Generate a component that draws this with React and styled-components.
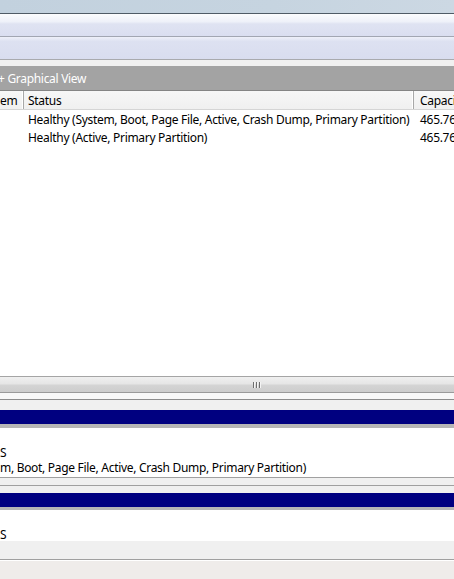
import React from "react";
import styled, { createGlobalStyle } from "styled-components";

const GlobalStyle = createGlobalStyle`
  html, body { margin: 0; padding: 0; background: #ffffff; overflow: hidden; }
  body { font-family: "Noto Sans", "Open Sans", sans-serif; font-size: 12px; letter-spacing: -0.3px; color: #000; }
`;

const Frame = styled.div`
  width: 454px;
  height: 579px;
  display: flex;
  flex-direction: column;
  overflow: hidden;
  background: #ffffff;
`;

const TitleStrip = styled.div`
  height: 13px;
  flex: none;
  background: linear-gradient(90deg, #c2d1de 0%, #c6d4e0 60%, #ccd8e3 100%);
  border-bottom: 1px solid #4f5b66;
`;

const MenuStrip = styled.div`
  height: 22px;
  flex: none;
  background: linear-gradient(180deg, #fbfcfe 0%, #eef1f9 35%, #dfe3f2 45%, #dadef0 100%);
  border-bottom: 1px solid #a2a6b2;
`;

const ToolStrip = styled.div`
  height: 22px;
  flex: none;
  background: linear-gradient(180deg, #eef0f9 0%, #dde1f1 20%, #d9ddef 100%);
  border-bottom: 1px solid #a9aaae;
`;

const Gap = styled.div`
  height: ${(p) => p.$h}px;
  flex: none;
  background: ${(p) => p.$bg || "#f0f0f0"};
`;

const ViewHeader = styled.div`
  height: 24px;
  flex: none;
  background: #a3a3a3;
  color: #ffffff;
  display: flex;
  align-items: center;
  font-size: 12px;
  overflow: hidden;
`;

const ViewTitle = styled.span`
  margin-left: -2px;
  white-space: nowrap;
`;

const ListHeader = styled.div`
  height: 18px;
  flex: none;
  display: flex;
  border-top: 1px solid #858585;
  border-bottom: 1px solid #d5d5d5;
  background: linear-gradient(180deg, #f7f7f7 0%, #f0f0f0 100%);
`;

const HeadCell = styled.div`
  width: ${(p) => (p.$w ? `${p.$w}px` : "auto")};
  flex: ${(p) => (p.$w ? "none" : "1")};
  padding-left: ${(p) => p.$pl}px;
  display: flex;
  align-items: center;
  white-space: nowrap;
  overflow: hidden;
  box-sizing: border-box;
  border-right: ${(p) => (p.$sep ? "1px solid #a8a8a8" : "none")};
  box-shadow: ${(p) => (p.$sep ? "inset -1px 0 0 #ffffff" : "none")};
`;

const ListBody = styled.div`
  flex: 1;
  min-height: 0;
  background: #ffffff;
`;

const Row = styled.div`
  height: 18px;
  display: flex;
  align-items: center;
  white-space: nowrap;
`;

const Cell = styled.div`
  width: ${(p) => (p.$w ? `${p.$w}px` : "auto")};
  flex: ${(p) => (p.$w ? "none" : "1")};
  padding-left: ${(p) => p.$pl}px;
  box-sizing: border-box;
  overflow: hidden;
`;

const HScroll = styled.div`
  height: 15px;
  flex: none;
  border-top: 1px solid #a5a5a5;
  border-bottom: 1px solid #9a9a9a;
  background: linear-gradient(180deg, #f0f0f0 0%, #e6e6e6 45%, #d4d4d4 55%, #cdcdcd 100%);
  display: flex;
  justify-content: center;
  align-items: center;
  padding-left: 58px;
`;

const Grip = styled.div`
  display: flex;
  gap: 2px;
`;

const GripLine = styled.span`
  width: 1px;
  height: 6px;
  background: #6e6e6e;
  box-shadow: 1px 0 0 #f4f4f4;
`;

const DiskPanel = styled.div`
  flex: none;
  display: flex;
  flex-direction: column;
  border-top: 1px solid ${(p) => p.$line};
`;

const DiskTop = styled.div`
  height: ${(p) => p.$h}px;
  background: #f0f0f0;
`;

const NavyBar = styled.div`
  height: 14px;
  background: #000080;
  border-bottom: ${(p) => p.$under}px solid #b6b6b6;
`;

const PartBody = styled.div`
  height: ${(p) => p.$h}px;
  background: #ffffff;
  padding-top: ${(p) => p.$pt}px;
  box-sizing: border-box;
  display: flex;
  flex-direction: column;
  white-space: nowrap;
  line-height: 15px;
`;

const BottomShelf = styled.div`
  height: 18px;
  background: #f0f0f0;
  border-bottom: 1px solid #a0a0a0;
`;

const StatusBar = styled.div`
  height: 18px;
  flex: none;
  background: #efecea;
  border-top: 1px solid #ffffff;
`;

export default function App() {
  return (
    <>
      <GlobalStyle />
      <Frame>
        <TitleStrip />
        <MenuStrip />
        <ToolStrip />
        <Gap $h={6} />
        <ViewHeader>
          <ViewTitle>+ Graphical View</ViewTitle>
        </ViewHeader>
        <ListHeader>
          <HeadCell $w={24} $pl={0} $sep>em</HeadCell>
          <HeadCell $w={390} $pl={4} $sep>Status</HeadCell>
          <HeadCell $pl={6}>Capacity</HeadCell>
        </ListHeader>
        <ListBody>
          <Row>
            <Cell $w={24} $pl={0} />
            <Cell $w={390} $pl={4}>Healthy (System, Boot, Page File, Active, Crash Dump, Primary Partition)</Cell>
            <Cell $pl={6}>465.76 GB</Cell>
          </Row>
          <Row>
            <Cell $w={24} $pl={0} />
            <Cell $w={390} $pl={4}>Healthy (Active, Primary Partition)</Cell>
            <Cell $pl={6}>465.76 GB</Cell>
          </Row>
        </ListBody>
        <HScroll>
          <Grip>
            <GripLine />
            <GripLine />
            <GripLine />
          </Grip>
        </HScroll>
        <Gap $h={6} $bg="#f8f8f8" />
        <DiskPanel $line="#8c8c8c">
          <DiskTop $h={10} />
          <NavyBar $under={4} />
          <PartBody $h={49} $pt={17}>
            <span>S</span>
            <span>m, Boot, Page File, Active, Crash Dump, Primary Partition)</span>
          </PartBody>
        </DiskPanel>
        <DiskPanel $line="#a0a0a0">
          <DiskTop $h={7} />
        </DiskPanel>
        <DiskPanel $line="#a0a0a0">
          <DiskTop $h={7} />
          <NavyBar $under={3} />
          <PartBody $h={31} $pt={17}>
            <span>S</span>
          </PartBody>
          <BottomShelf />
        </DiskPanel>
        <StatusBar />
      </Frame>
    </>
  );
}
